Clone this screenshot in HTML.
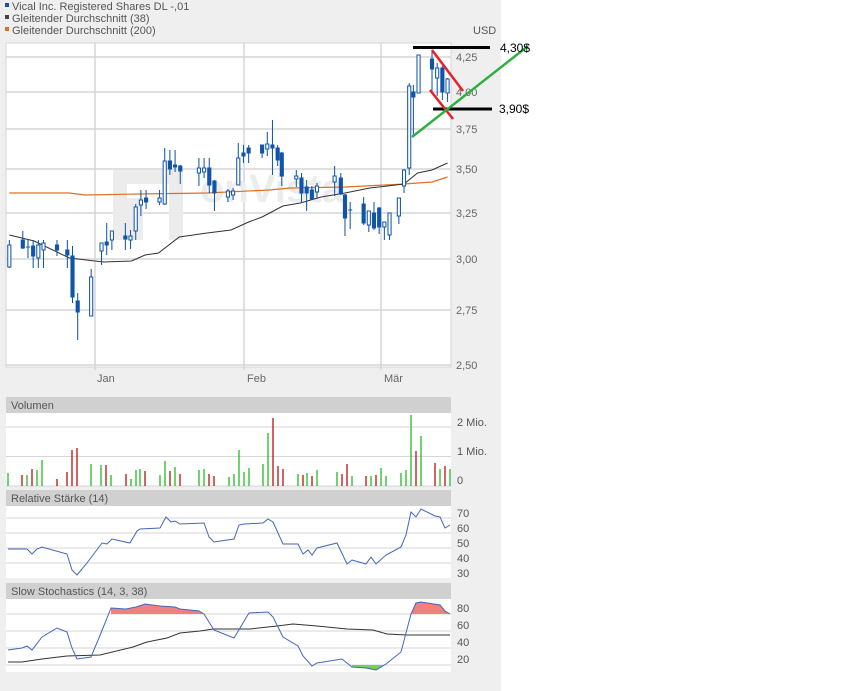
<!DOCTYPE html>
<html><head><meta charset="utf-8"><style>
html,body{margin:0;padding:0;background:#fff;}
svg{display:block;font-family:"Liberation Sans",sans-serif;}
</style></head><body>
<svg width="850" height="691" viewBox="0 0 850 691" xmlns="http://www.w3.org/2000/svg">
<rect x="0" y="0" width="501" height="691" fill="#efefef"/>
<!-- legend -->
<rect x="5" y="3" width="4" height="4" fill="#1155aa"/>
<text x="12" y="10" font-size="11" fill="#555">Vical Inc. Registered Shares DL -,01</text>
<rect x="5" y="15" width="4" height="4" fill="#444"/>
<text x="12" y="22" font-size="11" fill="#555">Gleitender Durchschnitt (38)</text>
<rect x="5" y="27" width="4" height="4" fill="#e07020"/>
<text x="12" y="34" font-size="11" fill="#555">Gleitender Durchschnitt (200)</text>
<text x="473" y="34" font-size="11" fill="#555">USD</text>

<!-- main plot -->
<rect x="6" y="43" width="445" height="324" fill="#fff" stroke="#d4d4d4"/>
<g stroke="#d6d6d6" stroke-width="1.5">
<line x1="6" y1="57" x2="451" y2="57"/><line x1="6" y1="92" x2="451" y2="92"/>
<line x1="6" y1="129" x2="451" y2="129"/><line x1="6" y1="169" x2="451" y2="169"/>
<line x1="6" y1="213" x2="451" y2="213"/><line x1="6" y1="259" x2="451" y2="259"/>
<line x1="6" y1="310" x2="451" y2="310"/><line x1="6" y1="365" x2="451" y2="365"/>
<line x1="95" y1="43" x2="95" y2="370"/><line x1="244" y1="43" x2="244" y2="370"/><line x1="381" y1="43" x2="381" y2="370"/>
</g>
<g font-size="11" fill="#666">
<text x="456" y="61">4,25</text><text x="456" y="96">4,00</text><text x="456" y="133">3,75</text>
<text x="456" y="173">3,50</text><text x="456" y="217">3,25</text><text x="456" y="263">3,00</text>
<text x="456" y="314">2,75</text><text x="456" y="369">2,50</text>
<text x="97" y="382">Jan</text><text x="247" y="382">Feb</text><text x="384" y="382">Mär</text>
</g>
<!-- watermark -->
<g fill="#ececec">
<path d="M113 170 h70 v70 h-14 v-56 h-42 v14 h-14z"/>
<rect x="113" y="198" width="30" height="42"/>
<text x="200" y="202" font-size="40" font-weight="bold">onVista</text>
</g>
<g transform="scale(1.036,1)">
<polyline fill="none" stroke="#e07020" stroke-width="1.2" points="9,193 67,193 82,195 133,194 200,193 260,190 280,188 333,187 390,184 417,182 432,177"/>
<polyline fill="none" stroke="#333" stroke-width="1" points="9,235 33,241 67,258 100,262 127,261 140,255 153,253 173,237 200,233 223,230 240,222 253,217 273,206 290,203 310,197 333,193 357,188 390,184 403,173 417,170 432,163"/>
<g stroke="#1155aa" stroke-width="1">
<!-- x, wt, wb, bt, bb, filled -->
<line x1="9" y1="240" x2="9" y2="268"/><rect x="7.5" y="245" width="3" height="22" fill="#fff"/>
<line x1="22" y1="231" x2="22" y2="249"/><rect x="20.5" y="240" width="3" height="8" fill="#1155aa"/>
<line x1="27" y1="240" x2="27" y2="258"/><line x1="25" y1="247" x2="29" y2="247"/>
<line x1="32" y1="240" x2="32" y2="268"/><rect x="30.5" y="246" width="3" height="10" fill="#1155aa"/>
<line x1="37" y1="240" x2="37" y2="268"/><rect x="35.5" y="245" width="3" height="13" fill="#fff"/>
<line x1="42" y1="240" x2="42" y2="268"/><rect x="40.5" y="243" width="3" height="7" fill="#fff"/>
<line x1="55" y1="240" x2="55" y2="256"/><rect x="53.5" y="245" width="3" height="5" fill="#1155aa"/>
<line x1="65" y1="240" x2="65" y2="268"/><rect x="63.5" y="250" width="3" height="5" fill="#1155aa"/>
<line x1="70" y1="246" x2="70" y2="303"/><rect x="68.5" y="256" width="3" height="41" fill="#1155aa"/>
<line x1="75" y1="293" x2="75" y2="340"/><rect x="73.5" y="301" width="3" height="11" fill="#1155aa"/>
<line x1="88" y1="269" x2="88" y2="316"/><rect x="86.5" y="277" width="3" height="39" fill="#fff"/>
<line x1="98" y1="243" x2="98" y2="265"/><rect x="96.5" y="243" width="3" height="8" fill="#fff"/>
<line x1="103" y1="223" x2="103" y2="255"/><rect x="101.5" y="242" width="3" height="3" fill="#1155aa"/>
<line x1="108" y1="231" x2="108" y2="250"/><rect x="106.5" y="231" width="3" height="9" fill="#fff"/>
<line x1="121" y1="223" x2="121" y2="250"/><rect x="119.5" y="236" width="3" height="3" fill="#1155aa"/>
<line x1="126" y1="230" x2="126" y2="249"/><rect x="124.5" y="236" width="3" height="4" fill="#fff"/>
<line x1="131" y1="204" x2="131" y2="240"/><rect x="129.5" y="207" width="3" height="24" fill="#fff"/>
<line x1="136" y1="190" x2="136" y2="216"/><rect x="134.5" y="200" width="3" height="5" fill="#fff"/>
<line x1="141" y1="190" x2="141" y2="209"/><rect x="139.5" y="198" width="3" height="4" fill="#1155aa"/>
<line x1="154" y1="190" x2="154" y2="205"/><rect x="152.5" y="198" width="3" height="4" fill="#fff"/>
<line x1="159" y1="148" x2="159" y2="205"/><rect x="157.5" y="161" width="3" height="43" fill="#fff"/>
<line x1="164" y1="150" x2="164" y2="175"/><rect x="162.5" y="161" width="3" height="8" fill="#1155aa"/>
<line x1="169" y1="150" x2="169" y2="172"/><rect x="167.5" y="165" width="3" height="2" fill="#1155aa"/>
<line x1="174" y1="165" x2="174" y2="184"/><rect x="172.5" y="166" width="3" height="5" fill="#1155aa"/>
<line x1="192" y1="158" x2="192" y2="186"/><rect x="190.5" y="168" width="3" height="5" fill="#fff"/>
<line x1="197" y1="158" x2="197" y2="178"/><rect x="195.5" y="168" width="3" height="4" fill="#fff"/>
<line x1="202" y1="158" x2="202" y2="193"/><rect x="200.5" y="168" width="3" height="17" fill="#1155aa"/>
<line x1="207" y1="180" x2="207" y2="211"/><rect x="205.5" y="181" width="3" height="12" fill="#1155aa"/>
<line x1="220" y1="189" x2="220" y2="202"/><rect x="218.5" y="191" width="3" height="6" fill="#fff"/>
<line x1="225" y1="188" x2="225" y2="200"/><rect x="223.5" y="191" width="3" height="4" fill="#fff"/>
<line x1="230" y1="143" x2="230" y2="185"/><rect x="228.5" y="158" width="3" height="27" fill="#fff"/>
<line x1="235" y1="145" x2="235" y2="163"/><rect x="233.5" y="153" width="3" height="3" fill="#1155aa"/>
<line x1="240" y1="145" x2="240" y2="163"/><rect x="238.5" y="148" width="3" height="5" fill="#1155aa"/>
<line x1="253" y1="145" x2="253" y2="158"/><rect x="251.5" y="145" width="3" height="8" fill="#1155aa"/>
<line x1="258" y1="132" x2="258" y2="156"/><rect x="256.5" y="144" width="3" height="5" fill="#fff"/>
<line x1="263" y1="120" x2="263" y2="175"/><rect x="261.5" y="145" width="3" height="3" fill="#1155aa"/>
<line x1="268" y1="145" x2="268" y2="166"/><rect x="266.5" y="148" width="3" height="12" fill="#1155aa"/>
<line x1="272" y1="152" x2="272" y2="186"/><rect x="270.5" y="153" width="3" height="23" fill="#1155aa"/>
<line x1="286" y1="170" x2="286" y2="187"/><rect x="284.5" y="176" width="3" height="3" fill="#fff"/>
<line x1="291" y1="173" x2="291" y2="203"/><rect x="289.5" y="178" width="3" height="15" fill="#1155aa"/>
<line x1="296" y1="180" x2="296" y2="211"/><rect x="294.5" y="187" width="3" height="6" fill="#1155aa"/>
<line x1="301" y1="186" x2="301" y2="200"/><rect x="299.5" y="190" width="3" height="9" fill="#1155aa"/>
<line x1="306" y1="183" x2="306" y2="198"/><rect x="304.5" y="186" width="3" height="6" fill="#fff"/>
<line x1="323" y1="166" x2="323" y2="196"/><rect x="321.5" y="176" width="3" height="6" fill="#fff"/>
<line x1="329" y1="173" x2="329" y2="195"/><rect x="327.5" y="178" width="3" height="16" fill="#1155aa"/>
<line x1="333" y1="194" x2="333" y2="236"/><rect x="331.5" y="195" width="3" height="23" fill="#1155aa"/>
<line x1="338" y1="202" x2="338" y2="229"/><line x1="336" y1="210" x2="340" y2="210"/>
<line x1="351" y1="197" x2="351" y2="225"/><rect x="349.5" y="204" width="3" height="19" fill="#1155aa"/>
<line x1="356" y1="211" x2="356" y2="232"/><rect x="354.5" y="211" width="3" height="14" fill="#fff"/>
<line x1="361" y1="202" x2="361" y2="230"/><rect x="359.5" y="213" width="3" height="15" fill="#1155aa"/>
<line x1="366" y1="207" x2="366" y2="234"/><rect x="364.5" y="208" width="3" height="19" fill="#1155aa"/>
<line x1="371" y1="222" x2="371" y2="240"/><rect x="369.5" y="222" width="3" height="5" fill="#fff"/>
<line x1="376" y1="213" x2="376" y2="240"/><rect x="374.5" y="213" width="3" height="22" fill="#fff"/>
<line x1="385" y1="198" x2="385" y2="224"/><rect x="383.5" y="198" width="3" height="18" fill="#fff"/>
<line x1="390" y1="169" x2="390" y2="193"/><rect x="388.5" y="170" width="3" height="16" fill="#fff"/>
<line x1="395" y1="83" x2="395" y2="175"/><rect x="393.5" y="86" width="3" height="82" fill="#fff"/>
<line x1="399" y1="85" x2="399" y2="137"/><rect x="397.5" y="92" width="3" height="5" fill="#1155aa"/>
<line x1="404" y1="55" x2="404" y2="93"/><rect x="402.5" y="55" width="3" height="38" fill="#fff"/>
<line x1="417" y1="50" x2="417" y2="92"/><rect x="415.5" y="59" width="3" height="10" fill="#1155aa"/>
<line x1="422" y1="63" x2="422" y2="96"/><rect x="420.5" y="68" width="3" height="10" fill="#fff"/>
<line x1="427" y1="66" x2="427" y2="100"/><rect x="425.5" y="68" width="3" height="24" fill="#1155aa"/>
<line x1="432" y1="78" x2="432" y2="102"/><rect x="430.5" y="79" width="3" height="14" fill="#fff"/>
</g>
</g>
<!-- annotations -->
<line x1="413" y1="47.5" x2="490" y2="47.5" stroke="#000" stroke-width="3"/>
<line x1="433" y1="109" x2="492" y2="109" stroke="#000" stroke-width="3"/>
<line x1="432" y1="50" x2="463" y2="91" stroke="#e8202a" stroke-width="2.5"/>
<line x1="430" y1="90" x2="453" y2="119" stroke="#e8202a" stroke-width="2.5"/>
<line x1="412" y1="137" x2="528" y2="46" stroke="#2db040" stroke-width="2.5"/>
<text x="500" y="52" font-size="12" fill="#000">4,30$</text>
<text x="499" y="113" font-size="12" fill="#000">3,90$</text>

<!-- Volume -->
<rect x="6" y="397" width="445" height="16" fill="#d0d0d0"/>
<text x="11" y="409" font-size="11" fill="#555">Volumen</text>
<rect x="6" y="413" width="445" height="73" fill="#fff"/>
<g stroke="#d6d6d6"><line x1="6" y1="427" x2="451" y2="427"/><line x1="6" y1="456.5" x2="451" y2="456.5"/><line x1="6" y1="486" x2="451" y2="486"/></g>
<g font-size="11" fill="#555"><text x="457" y="426">2 Mio.</text><text x="457" y="455">1 Mio.</text><text x="457" y="484">0</text></g>
<g stroke-width="1.3">
<g stroke="#22bb22"><line x1="8" y1="473" x2="8" y2="486"/><line x1="27" y1="475" x2="27" y2="486"/><line x1="37" y1="470" x2="37" y2="486"/><line x1="42" y1="460" x2="42" y2="486"/><line x1="91" y1="464" x2="91" y2="486"/><line x1="101" y1="465" x2="101" y2="486"/><line x1="111" y1="475" x2="111" y2="486"/><line x1="131" y1="479" x2="131" y2="486"/><line x1="136" y1="470" x2="136" y2="486"/><line x1="140" y1="469" x2="140" y2="486"/><line x1="160" y1="475" x2="160" y2="486"/><line x1="165" y1="461" x2="165" y2="486"/><line x1="175" y1="467" x2="175" y2="486"/><line x1="199" y1="470" x2="199" y2="486"/><line x1="204" y1="469" x2="204" y2="486"/><line x1="229" y1="477" x2="229" y2="486"/><line x1="234" y1="474" x2="234" y2="486"/><line x1="239" y1="450" x2="239" y2="486"/><line x1="244" y1="472" x2="244" y2="486"/><line x1="249" y1="468" x2="249" y2="486"/><line x1="263" y1="464" x2="263" y2="486"/><line x1="268" y1="433" x2="268" y2="486"/><line x1="298" y1="474" x2="298" y2="486"/><line x1="307" y1="473" x2="307" y2="486"/><line x1="317" y1="470" x2="317" y2="486"/><line x1="337" y1="472" x2="337" y2="486"/><line x1="352" y1="476" x2="352" y2="486"/><line x1="371" y1="476" x2="371" y2="486"/><line x1="381" y1="468" x2="381" y2="486"/><line x1="386" y1="476" x2="386" y2="486"/><line x1="401" y1="473" x2="401" y2="486"/><line x1="406" y1="470" x2="406" y2="486"/><line x1="411" y1="415" x2="411" y2="486"/><line x1="421" y1="436" x2="421" y2="486"/><line x1="440" y1="469" x2="440" y2="486"/><line x1="450" y1="469" x2="450" y2="486"/></g>
<g stroke="#bb1111"><line x1="22" y1="475" x2="22" y2="486"/><line x1="32" y1="469" x2="32" y2="486"/><line x1="57" y1="479" x2="57" y2="486"/><line x1="67" y1="472" x2="67" y2="486"/><line x1="72" y1="450" x2="72" y2="486"/><line x1="77" y1="448" x2="77" y2="486"/><line x1="106" y1="465" x2="106" y2="486"/><line x1="126" y1="474" x2="126" y2="486"/><line x1="145" y1="471" x2="145" y2="486"/><line x1="170" y1="471" x2="170" y2="486"/><line x1="180" y1="474" x2="180" y2="486"/><line x1="209" y1="474" x2="209" y2="486"/><line x1="214" y1="476" x2="214" y2="486"/><line x1="273" y1="418" x2="273" y2="486"/><line x1="278" y1="466" x2="278" y2="486"/><line x1="283" y1="469" x2="283" y2="486"/><line x1="303" y1="475" x2="303" y2="486"/><line x1="312" y1="476" x2="312" y2="486"/><line x1="342" y1="474" x2="342" y2="486"/><line x1="347" y1="464" x2="347" y2="486"/><line x1="366" y1="476" x2="366" y2="486"/><line x1="376" y1="475" x2="376" y2="486"/><line x1="416" y1="451" x2="416" y2="486"/><line x1="435" y1="463" x2="435" y2="486"/><line x1="445" y1="466" x2="445" y2="486"/></g>
</g>

<!-- RSI -->
<rect x="6" y="490" width="445" height="16" fill="#d0d0d0"/>
<text x="11" y="502" font-size="11" fill="#555">Relative Stärke (14)</text>
<rect x="6" y="506" width="445" height="72" fill="#fff"/>
<g stroke="#d6d6d6"><line x1="6" y1="518" x2="451" y2="518"/><line x1="6" y1="533" x2="451" y2="533"/><line x1="6" y1="548" x2="451" y2="548"/><line x1="6" y1="563" x2="451" y2="563"/></g>
<g font-size="11" fill="#555"><text x="457" y="517">70</text><text x="457" y="532">60</text><text x="457" y="547">50</text><text x="457" y="562">40</text><text x="457" y="577">30</text></g>
<polyline fill="none" stroke="#4466bb" stroke-width="1" points="8,549 27,549 32,554 37,549 42,547 67,554 72,570 77,575 87,563 102,543 107,544 112,539 130,543 137,531 140,529 160,528 166,517 171,522 175,521 180,524 204,523 209,537 214,542 234,539 239,525 244,524 263,523 268,519 273,522 283,544 298,544 303,554 308,550 312,555 317,548 337,543 347,564 352,560 366,564 371,557 376,564 386,555 401,547 406,535 411,512 416,517 421,509 435,516 440,517 445,528 450,525"/>

<!-- Stoch -->
<rect x="6" y="583" width="445" height="16" fill="#d0d0d0"/>
<text x="11" y="595" font-size="11" fill="#555">Slow Stochastics (14, 3, 38)</text>
<rect x="6" y="599" width="445" height="73" fill="#fff"/>
<g stroke="#d6d6d6"><line x1="6" y1="614" x2="451" y2="614"/><line x1="6" y1="631" x2="451" y2="631"/><line x1="6" y1="648" x2="451" y2="648"/><line x1="6" y1="665" x2="451" y2="665"/></g>
<g font-size="11" fill="#555"><text x="457" y="612">80</text><text x="457" y="629">60</text><text x="457" y="646">40</text><text x="457" y="663">20</text></g>
<polygon fill="#f08080" points="111,614 111,608 126,609 136,607 145,604 160,606 175,607 180,609 199,611 204,614"/>
<polygon fill="#f08080" points="411,614 416,603 421,602 440,605 445,611 450,614"/>
<polygon fill="#77cc66" points="352,665 352,667 366,668 376,670 386,664 386,665"/>
<polyline fill="none" stroke="#333" stroke-width="1" points="8,662 22,662 42,659 67,656 100,655 133,647 147,642 167,638 180,633 200,631 213,629 250,629 277,626 293,624 317,626 347,629 373,630 387,634 407,635 450,635"/>
<polyline fill="none" stroke="#4466bb" stroke-width="1" points="8,650 22,648 27,646 32,650 42,637 57,628 67,632 72,648 77,659 91,657 101,633 111,608 126,609 136,607 145,604 160,606 175,607 180,609 199,611 204,614 214,630 234,638 249,613 268,612 273,617 283,637 298,646 303,656 312,666 317,663 342,659 352,667 366,668 376,670 386,664 401,652 411,614 416,603 421,602 440,605 445,611 450,614"/>
</svg>
</body></html>
